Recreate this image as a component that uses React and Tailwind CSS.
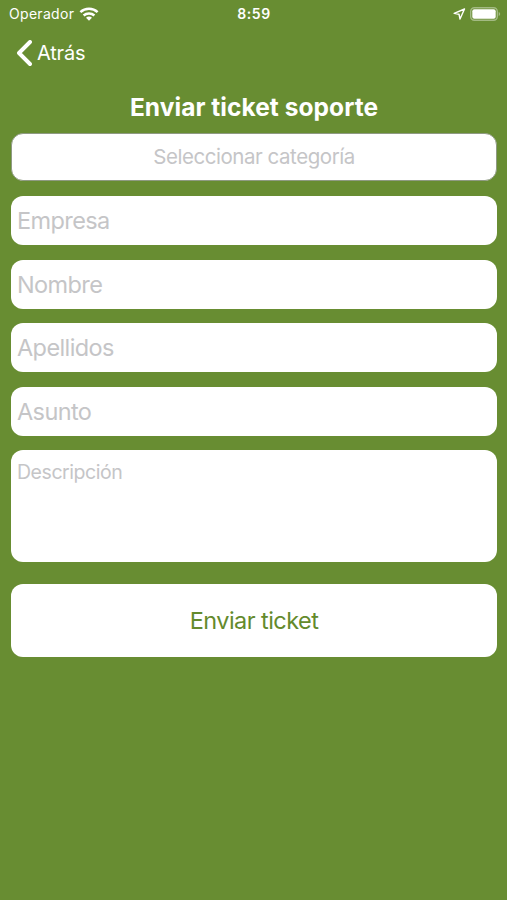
const fields = ["Empresa", "Nombre", "Apellidos", "Asunto"];

export default function App() {
  return (
    <div className="flex h-[900px] w-[507px] flex-col overflow-hidden whitespace-nowrap bg-[#688d32] font-['Inter',sans-serif] text-white">
      <header className="grid h-7 grid-cols-3 items-center pb-px pl-[9px] pr-[6px]">
        <div className="flex items-center gap-[5px]">
          <span className="text-[14px] tracking-[0.3px]">Operador</span>
          <svg width="20" height="14" viewBox="0 0 20 14" fill="none" stroke="currentColor" strokeWidth="2.5">
            <path d="M1.4 5.2C6.2.7 13.8.7 18.6 5.2M4.6 8.5C7.6 5.8 12.4 5.8 15.4 8.5" />
            <path d="M7 10.8C8.7 9.2 11.3 9.2 13 10.8L10 13.8Z" fill="currentColor" stroke="none" />
          </svg>
        </div>
        <span className="justify-self-center pr-[2px] text-[14px] font-semibold tracking-[0.6px]">8:59</span>
        <div className="flex items-center justify-end gap-1">
          <svg width="13" height="12" viewBox="0 0 13 12" fill="none" stroke="currentColor" strokeWidth="1.4" strokeLinejoin="round">
            <path d="M11.5 1 1.2 5.4 6 6.2 7 11Z" />
          </svg>
          <svg width="31" height="14" viewBox="0 0 31 14">
            <rect x=".7" y=".7" width="26.6" height="12.6" rx="3.7" fill="none" stroke="#a3ba83" strokeWidth="1.4" />
            <rect x="2.3" y="2.3" width="23.4" height="9.4" rx="2" fill="white" />
            <path d="M28.7 5v4c2-.7 2-3.3 0-4Z" fill="#a3ba83" />
          </svg>
        </div>
      </header>
      <nav className="flex h-[49px] items-center gap-1 pl-4">
        <svg width="17" height="26" viewBox="0 0 17 26" fill="none" stroke="currentColor" strokeWidth="3.9" strokeLinecap="round" strokeLinejoin="round">
          <path d="M14 2 3 13 14 24" />
        </svg>
        <span className="text-[20px] tracking-[-0.2px]">Atrás</span>
      </nav>
      <main className="flex flex-col pl-[11px] pr-[10px]">
        <h1 className="flex h-14 items-center justify-center pt-1 text-[24.5px] font-bold tracking-[0.05px]">Enviar ticket soporte</h1>
        <button className="flex h-12 items-center justify-center rounded-xl border border-[#8f9a83] bg-white pt-px text-[20.5px] tracking-[-0.45px] text-[#c5c5c7]">Seleccionar categoría</button>
        <div className="mt-[15px] flex flex-col gap-[14.5px]">
          {fields.map((field) => (
            <div key={field} className="flex h-[49px] items-center rounded-xl bg-white pl-1.5 pt-px text-[23.5px] tracking-[-0.6px] text-[#c5c5c7]">{field}</div>
          ))}
        </div>
        <div className="mt-[14px] h-[112px] rounded-xl bg-white pl-1.5 pt-2 text-[19.5px] tracking-[-0.45px] text-[#c5c5c7]">Descripción</div>
        <button className="mt-[22px] flex h-[73px] items-center justify-center rounded-xl bg-white pt-0.5 text-[23.5px] tracking-[-0.55px] text-[#648a2c]">Enviar ticket</button>
      </main>
    </div>
  );
}
